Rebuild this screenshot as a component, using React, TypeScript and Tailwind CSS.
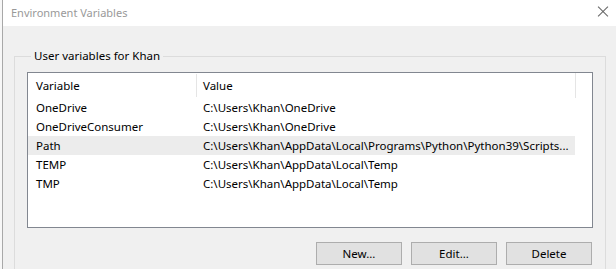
const rows = [
  { name: 'OneDrive', value: 'C:\\Users\\Khan\\OneDrive' },
  { name: 'OneDriveConsumer', value: 'C:\\Users\\Khan\\OneDrive' },
  { name: 'Path', value: 'C:\\Users\\Khan\\AppData\\Local\\Programs\\Python\\Python39\\Scripts...', selected: true },
  { name: 'TEMP', value: 'C:\\Users\\Khan\\AppData\\Local\\Temp' },
  { name: 'TMP', value: 'C:\\Users\\Khan\\AppData\\Local\\Temp' },
];

function DialogButton({ label }: { label: string }) {
  return (
    <button className="w-[86px] h-[23px] shrink-0 bg-[#e1e1e1] border border-[#adadad] text-[11.5px] text-black leading-none">
      {label}
    </button>
  );
}

function CloseIcon() {
  return (
    <div className="w-[12px] h-[12px] shrink-0 mb-[4px] relative">
      <div className="absolute left-[-1px] top-[5.5px] w-[14px] h-[1px] bg-[#666666] rotate-45" />
      <div className="absolute left-[-1px] top-[5.5px] w-[14px] h-[1px] bg-[#666666] -rotate-45" />
    </div>
  );
}

export default function App() {
  return (
    <div className="w-[616px] h-[269px] overflow-hidden flex bg-white font-['Noto_Sans',sans-serif] text-[11.5px] text-black">
      <div className="w-[2px] shrink-0 bg-[#f7f7f7]" />
      <div className="w-[1px] shrink-0 bg-[#a8a8a8]" />

      <div className="flex-1 min-w-0 flex flex-col">
        {/* title bar */}
        <div className="h-[26px] shrink-0 bg-white flex items-center pl-[8px] pr-[7px]">
          <span className="flex-1 text-[#999999] text-[11px] pt-[1px]">Environment Variables</span>
          <CloseIcon />
        </div>

        {/* body */}
        <div className="flex-1 min-h-0 overflow-hidden bg-[#f0f0f0] pl-[11px] pr-[10px] pt-[22px]">
          <fieldset className="border border-[#dcdcdc] min-w-0 h-[250px] px-[12px] pt-[8px] m-0">
            <legend className="px-[3px] ml-[4px] leading-[16px]">User variables for Khan</legend>

            <div className="bg-white border border-[#828790] h-[156px] flex flex-col">
              <div className="flex h-[25px] shrink-0 items-center">
                <div className="w-[168px] shrink-0 pl-[8px]">Variable</div>
                <div className="w-[1px] h-[23px] shrink-0 self-start mt-[1px] bg-[#e5e5e5]" />
                <div className="w-[378px] shrink-0 pl-[6px]">Value</div>
                <div className="w-[1px] h-[25px] shrink-0 self-start bg-[#e5e5e5]" />
              </div>
              {rows.map((r) => (
                <div
                  key={r.name}
                  className={`flex h-[19px] shrink-0 items-center w-[547px] ${r.selected ? 'bg-[#ececec]' : ''}`}
                >
                  <div className="w-[169px] shrink-0 pl-[8px] whitespace-nowrap">{r.name}</div>
                  <div className="pl-[6px] whitespace-nowrap">{r.value}</div>
                </div>
              ))}
            </div>

            <div className="flex justify-end gap-[9px] mt-[14px] pr-[1px]">
              <DialogButton label="New..." />
              <DialogButton label="Edit..." />
              <DialogButton label="Delete" />
            </div>
          </fieldset>
        </div>
      </div>
    </div>
  );
}
